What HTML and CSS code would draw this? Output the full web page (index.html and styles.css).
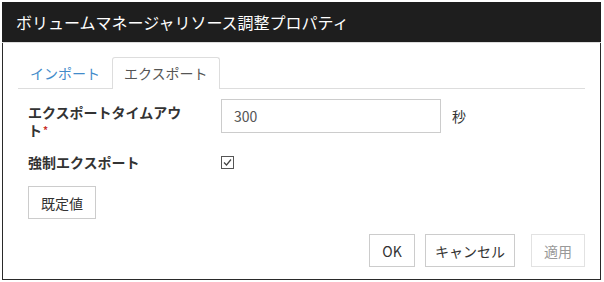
FILE: index.html
```html
<!DOCTYPE html>
<html lang="ja">
<head>
    <meta charset="UTF-8">
    <title>ボリュームマネージャリソース調整プロパティ</title>
    <link rel="stylesheet" href="styles.css">
</head>
<body>
    <div class="dialog">
        <div class="dialog-title">ボリュームマネージャリソース調整プロパティ</div>
        <div class="dialog-body">
            <ul class="tabs">
                <li class="tab">インポート</li>
                <li class="tab active">エクスポート</li>
            </ul>
            <div class="tab-content">
                <div class="form-row">
                    <label class="form-label">エクスポートタイムアウ<span class="nowrap">ト<span class="required">*</span></span></label>
                    <input type="text" class="input-field" value="300">
                    <span class="unit">秒</span>
                </div>
                <div class="form-row check-row">
                    <label class="form-label">強制エクスポート</label>
                    <span class="checkbox">
                        <svg width="13" height="13" viewBox="0 0 13 13">
                            <rect x="0.5" y="0.5" width="12" height="12" fill="#fff" stroke="#555"/>
                            <path d="M3 6.5 L5.5 9 L10 3.5" fill="none" stroke="#444" stroke-width="1.2"/>
                        </svg>
                    </span>
                </div>
                <button class="btn default-btn">既定値</button>
            </div>
            <div class="footer">
                <button class="btn ok-btn">OK</button>
                <button class="btn">キャンセル</button>
                <button class="btn apply-btn" disabled>適用</button>
            </div>
        </div>
    </div>
</body>
</html>
```

FILE: styles.css
```css
body {
    margin: 0;
    padding: 2px;
    background-color: white;
    font-family: "Noto Sans CJK JP", "Noto Sans", sans-serif;
    font-size: 14px;
    color: #333;
}
.dialog {
    width: 599px;
    height: 278px;
    border: 1px solid #2a2a2a;
    border-top: none;
    box-sizing: border-box;
    display: flex;
    flex-direction: column;
}
.dialog-title {
    background-color: #1e1e1e;
    color: white;
    font-size: 16px;
    height: 40px;
    line-height: 40px;
    padding-left: 14px;
    border-bottom: 1px solid #ddd;
    margin-left: -1px;
    margin-right: -1px;
}
.dialog-body {
    padding: 14px 15px 0 15px;
    flex: 1;
    display: flex;
    flex-direction: column;
}
.tabs {
    list-style: none;
    margin: 0;
    padding: 0;
    display: flex;
    border-bottom: 1px solid #ddd;
}
.tab {
    padding: 0 11px;
    height: 30px;
    line-height: 30px;
    color: #428bca;
    border: 1px solid transparent;
    border-bottom: none;
    border-radius: 3px 3px 0 0;
    margin-bottom: -1px;
}
.tab.active {
    color: #555;
    background: white;
    border-color: #ddd;
    height: 31px;
}
.tab-content {
    padding: 10px 0 0 10px;
}
.form-row {
    display: flex;
    align-items: flex-start;
}
.form-label {
    width: 193px;
    font-weight: bold;
    line-height: 18px;
    padding-top: 4px;
    padding-right: 30px;
    box-sizing: border-box;
}
.nowrap {
    white-space: nowrap;
}
.required {
    color: #c9302c;
    font-size: 10px;
    line-height: 10px;
    vertical-align: 2px;
    margin-left: 1px;
}
.input-field {
    width: 220px;
    height: 34px;
    box-sizing: border-box;
    border: 1px solid #ccc;
    padding: 0 12px;
    font-family: inherit;
    font-size: 14px;
    color: #555;
}
.unit {
    margin-left: 11px;
    line-height: 34px;
}
.check-row {
    margin-top: 14px;
    align-items: center;
}
.check-row .form-label {
    padding-top: 0;
}
.checkbox {
    display: flex;
}
.btn {
    font-family: inherit;
    font-size: 14px;
    color: #333;
    background: white;
    border: 1px solid #ccc;
    height: 33px;
    padding: 0 9px;
}
.btn:disabled {
    color: #999;
    border-color: #e2e2e2;
}
.default-btn {
    margin-top: 15px;
    align-self: flex-start;
    padding: 0 12px;
}
.footer {
    display: flex;
    justify-content: flex-end;
    gap: 10px;
    margin-top: 15px;
}
.ok-btn {
    min-width: 46px;
}
.apply-btn {
    margin-left: 6px;
    padding: 0 12px;
}
```
